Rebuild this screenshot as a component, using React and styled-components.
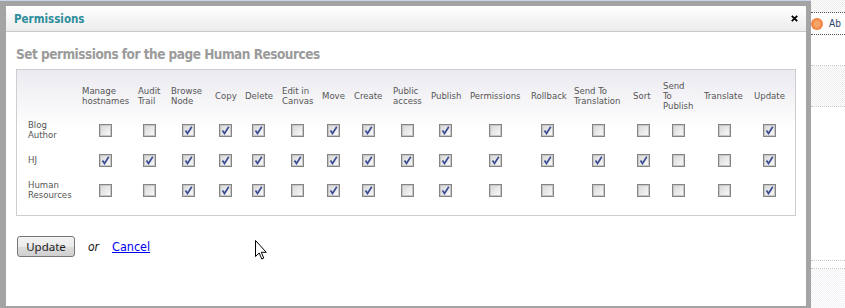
import React from "react"
import styled, { createGlobalStyle } from "styled-components"

const GlobalStyle = createGlobalStyle`
    body {
        margin: 0;
        background: #fff;
        font-family: "DejaVu Sans Condensed", "DejaVu Sans", sans-serif;
        font-stretch: condensed;
    }
`

const Page = styled.div`
    position: relative;
    display: flex;
    height: 308px;
    overflow: hidden;
`

const Frame = styled.div`
    flex: none;
    width: 811px;
    height: 308px;
    box-sizing: border-box;
    background: #a4a4a4;
    border-top: 1px solid #c6d5e8;
    padding: 5px 5px 2px 6px;
`

const Dialog = styled.div`
    height: 100%;
    background: #fff;
    display: flex;
    flex-direction: column;
`

const TitleBar = styled.div`
    height: 26px;
    box-sizing: border-box;
    display: flex;
    align-items: center;
    justify-content: space-between;
    padding: 0 8px;
    background: linear-gradient(#ffffff, #ececec);
    border-bottom: 1px solid #c9c9c9;
`

const Title = styled.span`
    color: #2e8d9b;
    font-weight: bold;
    font-size: 11.5px;
`

const Close = styled.svg`
    width: 7px;
    height: 7px;
`

const Body = styled.div`
    padding: 0 10px;
`

const Heading = styled.h2`
    margin: 12px 0 5px;
    font-size: 13.5px;
    letter-spacing: -0.5px;
    line-height: 20px;
    color: #9b9b9b;
    font-weight: bold;
`

const Box = styled.div`
    width: 780px;
    box-sizing: border-box;
    border: 1px solid #cecece;
    padding: 7px 5px 10px;
    background: linear-gradient(#ebeaf0, #ffffff 60px);
`

const Grid = styled.div`
    display: grid;
    grid-template-columns: ${p => p.cols.map(c => c + "px").join(" ")};
    grid-template-rows: 38px repeat(3, 30px);
    font-size: 9.5px;
    line-height: 10px;
`

const HeadCell = styled.div`
    align-self: center;
    padding-left: 5px;
    color: #555;
    white-space: nowrap;
`

const RowLabel = styled.div`
    align-self: center;
    padding-left: 6px;
    color: #555;
    white-space: nowrap;
`

const CheckCell = styled.div`
    display: flex;
    align-items: center;
    justify-content: center;
`

const Box13 = styled.span`
    width: 13px;
    height: 13px;
    box-sizing: border-box;
    border: 1px solid #858585;
    box-shadow: inset 0 0 0 1px #c6c6c6;
    background: linear-gradient(135deg, #d6d6d6, #fbfbfb);
    display: flex;
    align-items: center;
    justify-content: center;
`

const Actions = styled.div`
    margin-top: 20px;
    display: flex;
    align-items: center;
    gap: 13px;
    padding-left: 1px;
`

const Button = styled.button`
    width: 58px;
    height: 21px;
    border: 1px solid #767676;
    border-radius: 3px;
    background: linear-gradient(#f3f3f3 0%, #ebebeb 50%, #dddddd 51%, #cfcfcf 100%);
    font-family: "Noto Sans", "Open Sans", sans-serif;
    font-size: 11.5px;
    color: #222;
    padding: 0;
`

const Or = styled.span`
    font-style: italic;
    font-size: 12px;
    color: #111;
`

const Link = styled.a`
    color: #0000ee;
    font-size: 12.5px;
    text-decoration: underline;
    cursor: pointer;
`

const Sidebar = styled.div`
    flex: 1;
    display: flex;
    flex-direction: column;
    overflow: hidden;
`

const Checker = styled.div`
    height: ${p => p.h}px;
    background: repeating-conic-gradient(${p => p.tone} 0 25%, #ffffff 0 50%) 0 0 / 2px 2px;
`

const Blank = styled.div`
    height: ${p => p.h}px;
`

const Dots = styled.div`
    height: 0;
    border-top: 1px dotted ${p => p.tone};
`

const Item = styled.div`
    height: 22px;
    display: flex;
    align-items: center;
    gap: 6px;
    font-family: "DejaVu Sans", sans-serif;
    font-size: 10px;
    color: #2b3f6b;
    white-space: nowrap;
`

const Dot = styled.span`
    flex: none;
    width: 12px;
    height: 12px;
    border-radius: 50%;
    background: radial-gradient(circle, #f6a46a 0 30%, #ec7a33 70%);
`

const Cursor = styled.svg`
    position: absolute;
    left: 255px;
    top: 240px;
    width: 12px;
    height: 20px;
`

const columns = [
    "Manage|hostnames", "Audit|Trail", "Browse|Node", "Copy", "Delete", "Edit in|Canvas",
    "Move", "Create", "Public|access", "Publish", "Permissions", "Rollback",
    "Send To|Translation", "Sort", "Send|To|Publish", "Translate", "Update"
]

const widths = [55, 56, 33, 44, 30, 37, 40, 32, 39, 38, 39, 61, 43, 59, 30, 41, 50, 41]

const roles = [
    { name: "Blog|Author", perms: [0,0,1,1,1,0,1,1,0,1,0,1,0,0,0,0,1] },
    { name: "HJ", perms: [1,1,1,1,1,1,1,1,1,1,1,1,1,1,0,0,1] },
    { name: "Human|Resources", perms: [0,0,1,1,1,0,1,1,0,1,0,0,0,0,0,0,1] },
]

const lines = (text) => text.split("|").map((l, i) => (
    <React.Fragment key={i}>{i > 0 && <br />}{l}</React.Fragment>
))

const Check = ({ on }) => (
    <Box13>
        {on ? (
            <svg width="9" height="9" viewBox="0 0 9 9">
                <path d="M1.5 4.5 L3.5 7.5 L7.8 0.8" fill="none" stroke="#3a4d94" strokeWidth="1.7" />
            </svg>
        ) : null}
    </Box13>
)

const App = () => {
    return (
        <>
            <GlobalStyle />
            <Page>
                <Frame>
                    <Dialog>
                        <TitleBar>
                            <Title>Permissions</Title>
                            <Close viewBox="0 0 7 7">
                                <path d="M0.8 0.8 L6.2 6.2 M6.2 0.8 L0.8 6.2" stroke="#000" strokeWidth="1.8" />
                            </Close>
                        </TitleBar>
                        <Body>
                            <Heading>Set permissions for the page Human Resources</Heading>
                            <Box>
                                <Grid cols={widths}>
                                    <HeadCell />
                                    {columns.map(c => <HeadCell key={c}>{lines(c)}</HeadCell>)}
                                    {roles.map(role => (
                                        <React.Fragment key={role.name}>
                                            <RowLabel>{lines(role.name)}</RowLabel>
                                            {role.perms.map((p, i) => (
                                                <CheckCell key={i}><Check on={p} /></CheckCell>
                                            ))}
                                        </React.Fragment>
                                    ))}
                                </Grid>
                            </Box>
                            <Actions>
                                <Button>Update</Button>
                                <Or>or</Or>
                                <Link>Cancel</Link>
                            </Actions>
                        </Body>
                    </Dialog>
                </Frame>
                <Sidebar>
                    <Checker h={12} tone="#ececec" />
                    <Dots tone="#555" />
                    <Item><Dot />Ab</Item>
                    <Dots tone="#555" />
                    <Blank h={30} />
                    <Dots tone="#c8c8c8" />
                    <Checker h={41} tone="#ededed" />
                    <Dots tone="#c8c8c8" />
                    <Blank h={156} />
                    <Dots tone="#c8c8c8" />
                    <Blank h={7} />
                    <Dots tone="#c8c8c8" />
                    <Checker h={40} tone="#f1f1f5" />
                </Sidebar>
                <Cursor viewBox="0 0 12 20">
                    <path d="M0.5 0.5 L0.5 16.5 L4.2 13 L6.8 19 L8.8 18.1 L6.3 12.3 L11.3 12.3 Z" fill="#fff" stroke="#000" strokeWidth="1" strokeLinejoin="miter" />
                </Cursor>
            </Page>
        </>
    )
}

export default App
